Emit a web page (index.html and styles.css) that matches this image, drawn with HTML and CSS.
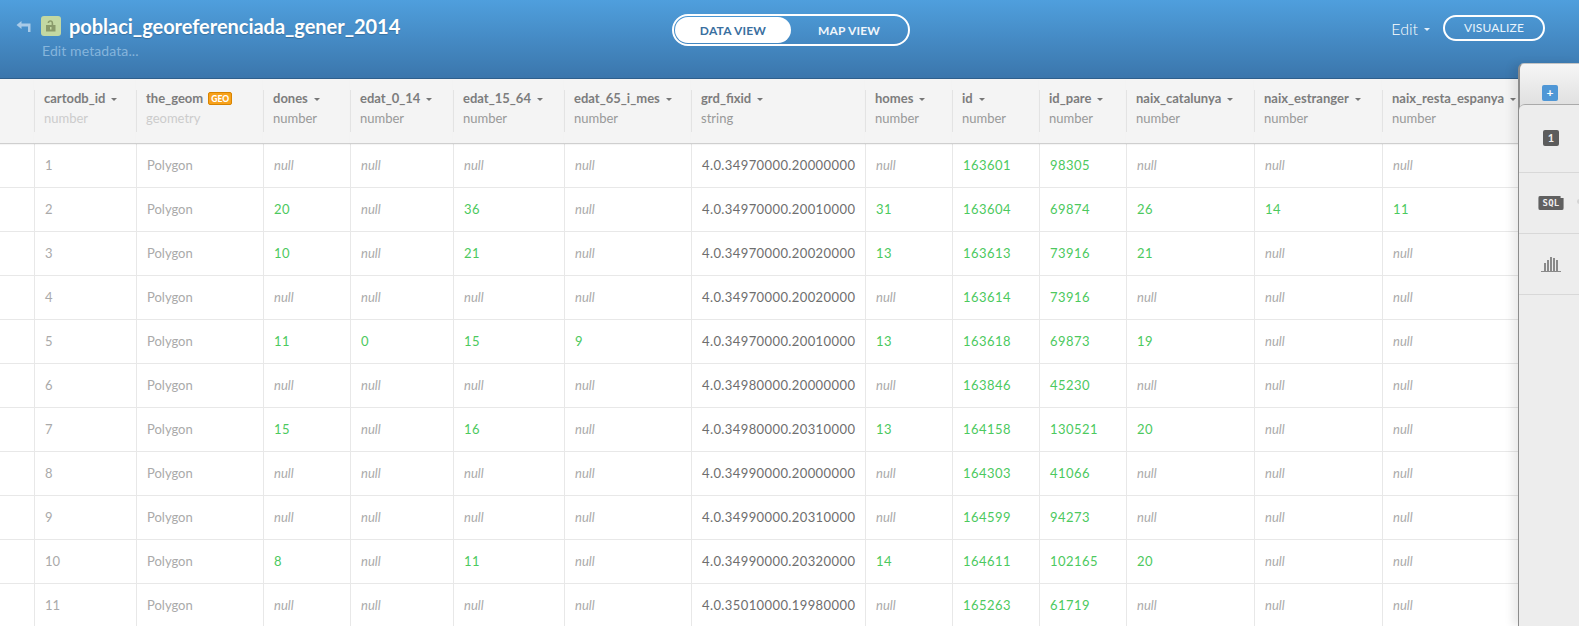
FILE: index.html
```html
<!DOCTYPE html>
<html lang="en">
<head>
<meta charset="utf-8">
<title>poblaci_georeferenciada_gener_2014</title>
<link rel="stylesheet" href="styles.css">
</head>
<body>
<header class="topbar">
  <div class="title-block">
    <div class="title-row">
      <svg class="back" width="15" height="12" viewBox="0 0 15 12"><path d="M0.5 4 L5.5 0 V2.5 H14.5 V11 H12 V5.5 H5.5 V8 Z" fill="#a9cbe8"/></svg>
      <span class="lock"><svg width="10" height="12" viewBox="0 0 10 12"><path fill-rule="evenodd" d="M0 5H5.6V3.2C5.6 2.2 5 1.8 4.4 1.8 3.8 1.8 3.2 2.3 3.2 3H1.6C1.6 1.2 3 .2 4.4.2 6 .2 7.2 1.4 7.2 3.2V5H9.5V11.5H0ZM4 7V9.5H5.5V7Z" fill="#8a9a6a"/></svg></span>
      <h1 class="title">poblaci_georeferenciada_gener_2014</h1>
    </div>
    <div class="meta">Edit metadata...</div>
  </div>
  <div class="switch">
    <span class="switch-item active">DATA VIEW</span>
    <span class="switch-item">MAP VIEW</span>
  </div>
  <div class="actions">
    <span class="edit">Edit<i class="caret caret-white"></i></span>
    <span class="visualize">VISUALIZE</span>
  </div>
</header>
<main class="grid-wrap">
<table class="grid">
  <colgroup>
    <col class="c0"><col class="c1"><col class="c2"><col class="c3"><col class="c4"><col class="c5"><col class="c6"><col class="c7"><col class="c8"><col class="c9"><col class="c10"><col class="c11"><col class="c12"><col class="c13">
  </colgroup>
  <thead>
    <tr>
      <th></th>
      <th class="muted-head"><b>cartodb_id<i class="caret"></i></b><small>number</small></th>
      <th class="muted-head"><b>the_geom<span class="geo">GEO</span></b><small>geometry</small></th>
      <th><b>dones<i class="caret"></i></b><small>number</small></th>
      <th><b>edat_0_14<i class="caret"></i></b><small>number</small></th>
      <th><b>edat_15_64<i class="caret"></i></b><small>number</small></th>
      <th><b>edat_65_i_mes<i class="caret"></i></b><small>number</small></th>
      <th><b>grd_fixid<i class="caret"></i></b><small>string</small></th>
      <th><b>homes<i class="caret"></i></b><small>number</small></th>
      <th><b>id<i class="caret"></i></b><small>number</small></th>
      <th><b>id_pare<i class="caret"></i></b><small>number</small></th>
      <th><b>naix_catalunya<i class="caret"></i></b><small>number</small></th>
      <th><b>naix_estranger<i class="caret"></i></b><small>number</small></th>
      <th><b>naix_resta_espanya<i class="caret"></i></b><small>number</small></th>
    </tr>
  </thead>
  <tbody>
    <tr><td></td><td class="m">1</td><td class="m">Polygon</td><td class="n">null</td><td class="n">null</td><td class="n">null</td><td class="n">null</td><td class="s">4.0.34970000.20000000</td><td class="n">null</td><td class="g">163601</td><td class="g">98305</td><td class="n">null</td><td class="n">null</td><td class="n">null</td></tr>
    <tr><td></td><td class="m">2</td><td class="m">Polygon</td><td class="g">20</td><td class="n">null</td><td class="g">36</td><td class="n">null</td><td class="s">4.0.34970000.20010000</td><td class="g">31</td><td class="g">163604</td><td class="g">69874</td><td class="g">26</td><td class="g">14</td><td class="g">11</td></tr>
    <tr><td></td><td class="m">3</td><td class="m">Polygon</td><td class="g">10</td><td class="n">null</td><td class="g">21</td><td class="n">null</td><td class="s">4.0.34970000.20020000</td><td class="g">13</td><td class="g">163613</td><td class="g">73916</td><td class="g">21</td><td class="n">null</td><td class="n">null</td></tr>
    <tr><td></td><td class="m">4</td><td class="m">Polygon</td><td class="n">null</td><td class="n">null</td><td class="n">null</td><td class="n">null</td><td class="s">4.0.34970000.20020000</td><td class="n">null</td><td class="g">163614</td><td class="g">73916</td><td class="n">null</td><td class="n">null</td><td class="n">null</td></tr>
    <tr><td></td><td class="m">5</td><td class="m">Polygon</td><td class="g">11</td><td class="g">0</td><td class="g">15</td><td class="g">9</td><td class="s">4.0.34970000.20010000</td><td class="g">13</td><td class="g">163618</td><td class="g">69873</td><td class="g">19</td><td class="n">null</td><td class="n">null</td></tr>
    <tr><td></td><td class="m">6</td><td class="m">Polygon</td><td class="n">null</td><td class="n">null</td><td class="n">null</td><td class="n">null</td><td class="s">4.0.34980000.20000000</td><td class="n">null</td><td class="g">163846</td><td class="g">45230</td><td class="n">null</td><td class="n">null</td><td class="n">null</td></tr>
    <tr><td></td><td class="m">7</td><td class="m">Polygon</td><td class="g">15</td><td class="n">null</td><td class="g">16</td><td class="n">null</td><td class="s">4.0.34980000.20310000</td><td class="g">13</td><td class="g">164158</td><td class="g">130521</td><td class="g">20</td><td class="n">null</td><td class="n">null</td></tr>
    <tr><td></td><td class="m">8</td><td class="m">Polygon</td><td class="n">null</td><td class="n">null</td><td class="n">null</td><td class="n">null</td><td class="s">4.0.34990000.20000000</td><td class="n">null</td><td class="g">164303</td><td class="g">41066</td><td class="n">null</td><td class="n">null</td><td class="n">null</td></tr>
    <tr><td></td><td class="m">9</td><td class="m">Polygon</td><td class="n">null</td><td class="n">null</td><td class="n">null</td><td class="n">null</td><td class="s">4.0.34990000.20310000</td><td class="n">null</td><td class="g">164599</td><td class="g">94273</td><td class="n">null</td><td class="n">null</td><td class="n">null</td></tr>
    <tr><td></td><td class="m">10</td><td class="m">Polygon</td><td class="g">8</td><td class="n">null</td><td class="g">11</td><td class="n">null</td><td class="s">4.0.34990000.20320000</td><td class="g">14</td><td class="g">164611</td><td class="g">102165</td><td class="g">20</td><td class="n">null</td><td class="n">null</td></tr>
    <tr><td></td><td class="m">11</td><td class="m">Polygon</td><td class="n">null</td><td class="n">null</td><td class="n">null</td><td class="n">null</td><td class="s">4.0.35010000.19980000</td><td class="n">null</td><td class="g">165263</td><td class="g">61719</td><td class="n">null</td><td class="n">null</td><td class="n">null</td></tr>
  </tbody>
</table>
</main>
<aside class="tools">
  <div class="tool-tab"><span class="plus">+</span></div>
  <div class="tool-panel">
    <div class="tool-item tool-num"><span class="num">1</span></div>
    <div class="tool-item tool-sql"><span class="sql">SQL</span></div>
    <div class="tool-item"><svg width="20" height="16" viewBox="0 0 20 16"><path d="M0 15H20V16H0ZM3 7H5V15H3ZM6 4H8V15H6ZM9 1H11V15H9ZM12 2H14V15H12ZM15 4H17V15H15Z" fill="#8a8a8a"/></svg></div>
  </div>
</aside>
</body>
</html>
```
FILE: styles.css
```css
* { box-sizing: border-box; }
html, body { margin: 0; height: 100%; overflow: hidden; }
body { font-family: Lato, "Open Sans", sans-serif; background: #fff; color: #666; position: relative; }

.topbar {
  height: 79px;
  background: linear-gradient(#4f9fdd, #3b76ac);
  border-bottom: 1px solid #2f5f8c;
  display: grid;
  grid-template-columns: 672px 238px 1fr;
  position: relative;
}
.title-block { padding: 14px 0 0 16px; }
.title-row { display: flex; align-items: center; height: 24px; }
.back { margin-right: 10px; margin-top: 1px; }
.lock {
  width: 20px; height: 20px; border-radius: 3px; background: #c3d8a2;
  display: flex; align-items: center; justify-content: center; margin-right: 8px;
}
.title { margin: 0; font-size: 20px; font-weight: 700; color: #fff; line-height: 24px; letter-spacing: -.03px; text-shadow: 0 1px 1px rgba(0,0,0,.2); }
.meta { margin: 4px 0 0 26px; font-size: 14px; line-height: 18px; color: #86b5dc; letter-spacing: .1px; }

.switch {
  margin-top: 14px; height: 32px; border: 2px solid #fff; border-radius: 16px;
  display: flex; padding: 1px; align-items: stretch;
}
.switch-item {
  flex: 1 1 50%; border-radius: 13px; display: flex; align-items: center; justify-content: center;
  font-size: 12px; font-weight: 700; color: #f0f6fb; letter-spacing: .2px;
}
.switch-item.active { background: #fff; color: #3a6f9f; }

.actions { display: flex; justify-content: flex-end; align-items: flex-start; padding: 15px 34px 0 0; }
.edit { font-size: 16px; font-weight: 300; line-height: 28px; color: #fff; margin-right: 13px; display: inline-flex; align-items: center; }
.visualize {
  width: 102px; height: 26px; border: 2px solid #fff; border-radius: 13px;
  font-size: 12px; font-weight: 400; line-height: 22px; text-align: center; color: #eaf4fc; letter-spacing: .2px;
}

.caret { display: inline-block; width: 0; height: 0; border: 3px solid transparent; border-top: 3px solid #777; border-bottom: 0; margin-left: 6px; vertical-align: middle; }
.caret-white { border-top-color: #e4f0fa; }

.grid-wrap { overflow: hidden; }
.grid { table-layout: fixed; border-collapse: separate; border-spacing: 0; width: 1700px; }
.c0 { width: 34px; } .c1 { width: 102px; } .c2 { width: 127px; } .c3 { width: 87px; }
.c4 { width: 103px; } .c5 { width: 111px; } .c6 { width: 127px; } .c7 { width: 174px; }
.c8 { width: 87px; } .c9 { width: 87px; } .c10 { width: 87px; } .c11 { width: 128px; }
.c12 { width: 128px; } .c13 { width: 318px; }

.grid th {
  height: 65px; background: #f4f4f4; text-align: left; font-weight: 400;
  border-bottom: 1px solid #cfcfcf; box-shadow: 0 1px 1px rgba(0,0,0,.04);
  padding: 11px 0 0 10px; vertical-align: top; position: relative;
}
.grid th:not(:first-child)::before {
  content: ""; position: absolute; left: 0; top: 11px; height: 42px; width: 1px; background: #e3e3e3;
}
.grid th b { display: block; font-size: 13px; line-height: 17px; font-weight: 700; color: #7d7d7d; white-space: nowrap; }
.grid th small { display: block; font-size: 13px; line-height: 17px; margin-top: 3px; color: #999; }
.muted-head small { color: #ccc !important; }
.geo {
  display: inline-block; margin-left: 5px; padding: 0 2px; height: 13px; line-height: 12px; font-size: 8.5px; font-weight: 900; color: #fff;
  background: #f7a11b; border: 1px solid #d88400; border-radius: 2px; vertical-align: 1px;
}

.grid td {
  height: 44px; padding: 0 0 2px 10px; font-size: 13px; border-bottom: 1px solid #e8e8e8; border-left: 1px solid #e8e8e8; white-space: nowrap; overflow: hidden;
}
.grid td:first-child { border-left: 0; }
.m { color: #aaa; }
.n { color: #aaa; font-style: italic; }
.g { color: #4cc95e; letter-spacing: .45px; }
.s { color: #6e6e6e; letter-spacing: .4px; }

.tools {
  position: absolute; left: 1518px; top: 63px; right: 0; bottom: 0;
  background: linear-gradient(#f6f6f6, #e0e0e0 41px);
  border-left: 2px solid #8c8c8c; border-top: 1px solid #c4c4c4; border-top-left-radius: 6px;
  box-shadow: -6px 0 8px rgba(0,0,0,.08);
}
.tool-tab { height: 40px; padding: 21px 0 0 1px; display: flex; justify-content: center; }
.plus { width: 16px; height: 16px; border-radius: 2px; background: #4f97d6; color: #fff; font-size: 12px; line-height: 15px; font-weight: 700; text-align: center; }
.tool-panel { height: 523px; margin-left: -1px; background: #ededed; border-top: 1px solid #aaa; border-top-left-radius: 6px; }
.tool-item { height: 61px; border-bottom: 1px solid #d8d8d8; display: flex; align-items: center; justify-content: center; padding-left: 4px; position: relative; }
.tool-num { height: 68px; align-items: flex-start; padding-top: 25px; }
.num { width: 16px; height: 16px; border-radius: 2px; background: #5c5c5c; color: #eee; font-size: 11px; line-height: 16px; font-weight: 700; text-align: center; }
.sql {
  background: #606060; color: #eee; font: 700 9px/14px "DejaVu Sans Mono", monospace; padding: 0 4px; border-radius: 2px; letter-spacing: .3px;
  clip-path: polygon(0 0, 88% 0, 88% 15%, 100% 15%, 100% 100%, 0 100%);
}
.tool-sql::after { content: ""; position: absolute; right: -3px; top: 26px; width: 5px; height: 5px; border-radius: 50%; background: #d4d4d4; }
```
